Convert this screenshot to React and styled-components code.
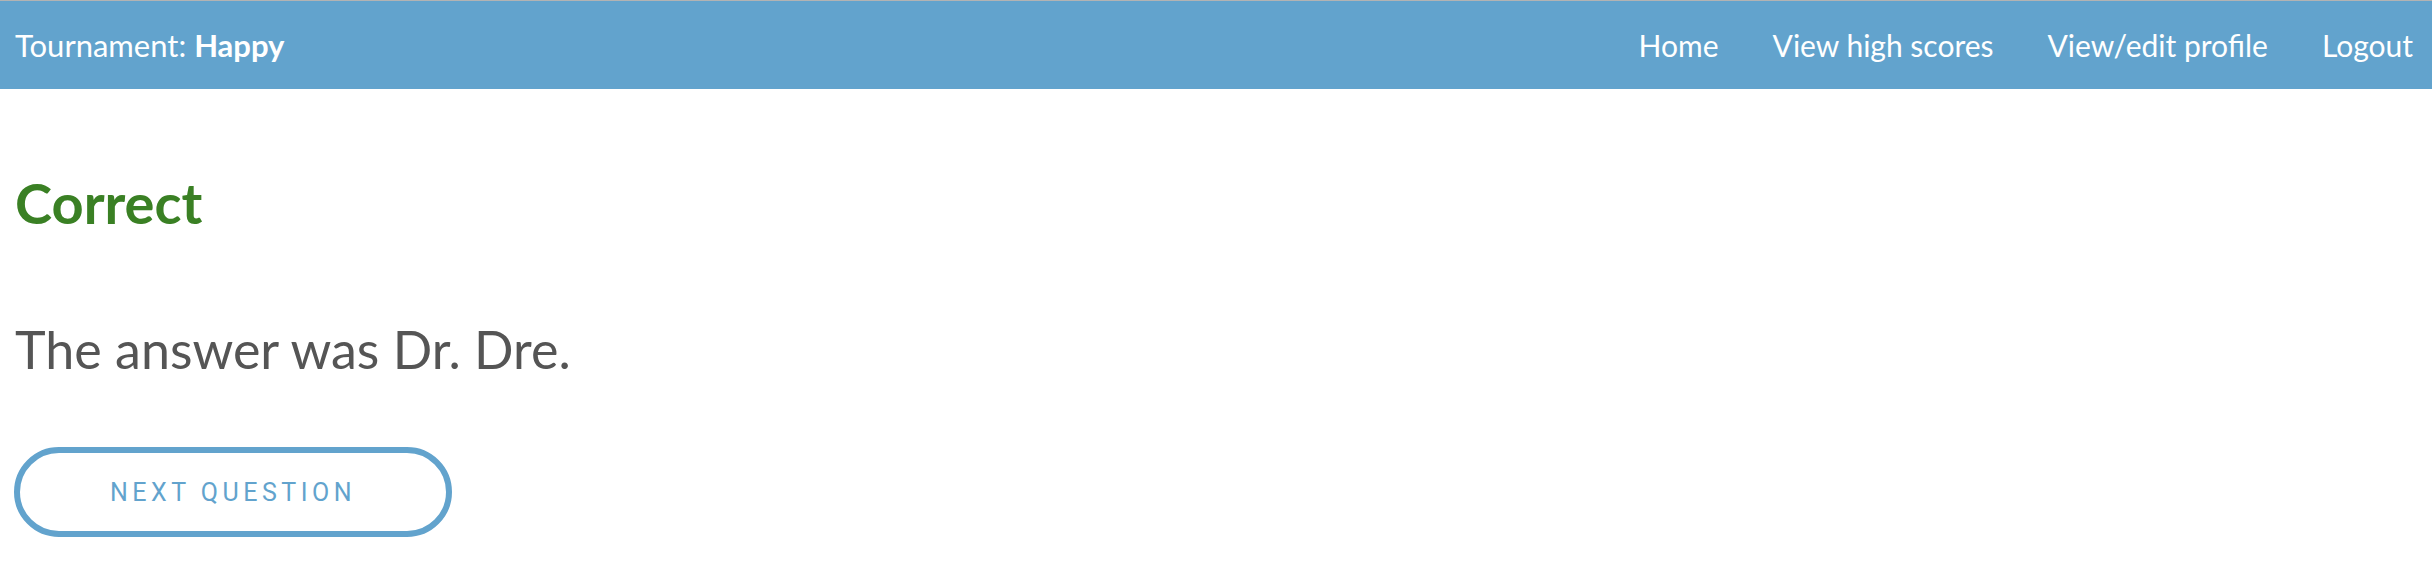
import React from 'react'
import styled, { createGlobalStyle } from 'styled-components'

const GlobalStyle = createGlobalStyle`
  html, body {
    margin: 0;
    padding: 0;
    background: #fff;
    font-family: Lato, "Open Sans", sans-serif;
  }
`

const NavBar = styled.nav`
  display: flex;
  justify-content: space-between;
  align-items: center;
  height: 88px;
  padding: 0 19px 0 15px;
  background: #62a3cd;
  border-top: 1px solid #b3b3b3;
  color: #fff;
  font-size: 30px;
`

const Brand = styled.div`
  font-size: 31px;
  font-weight: 400;

  strong {
    font-weight: 700;
  }
`

const NavLinks = styled.ul`
  display: flex;
  gap: 54px;
  margin: 0;
  padding: 0;
  list-style: none;
`

const NavLink = styled.a`
  color: #fff;
  text-decoration: none;
  cursor: pointer;
`

const Main = styled.main`
  display: flex;
  flex-direction: column;
  align-items: flex-start;
  padding: 0 15px;
`

const Result = styled.h2`
  margin: 86px 0 0;
  font-size: 56px;
  line-height: 1;
  font-weight: 700;
  color: #3a8024;
`

const Answer = styled.p`
  margin: 92px 0 0;
  font-size: 52px;
  line-height: 1;
  font-weight: 400;
  color: #555;
`

const NextButton = styled.button`
  margin: 72px 0 0 -1px;
  width: 438px;
  height: 90px;
  border: 6px solid #62a3cd;
  border-radius: 45px;
  background: #fff;
  color: #62a3cd;
  font-family: Roboto, sans-serif;
  font-size: 25px;
  font-weight: 400;
  letter-spacing: 0.18em;
  text-transform: uppercase;
  cursor: pointer;
`

const links = ['Home', 'View high scores', 'View/edit profile', 'Logout']

export default function App() {
  return (
    <>
      <GlobalStyle />
      <NavBar>
        <Brand>
          Tournament: <strong>Happy</strong>
        </Brand>
        <NavLinks>
          {links.map((l) => (
            <li key={l}>
              <NavLink>{l}</NavLink>
            </li>
          ))}
        </NavLinks>
      </NavBar>
      <Main>
        <Result>Correct</Result>
        <Answer>The answer was Dr. Dre.</Answer>
        <NextButton>Next question</NextButton>
      </Main>
    </>
  )
}
